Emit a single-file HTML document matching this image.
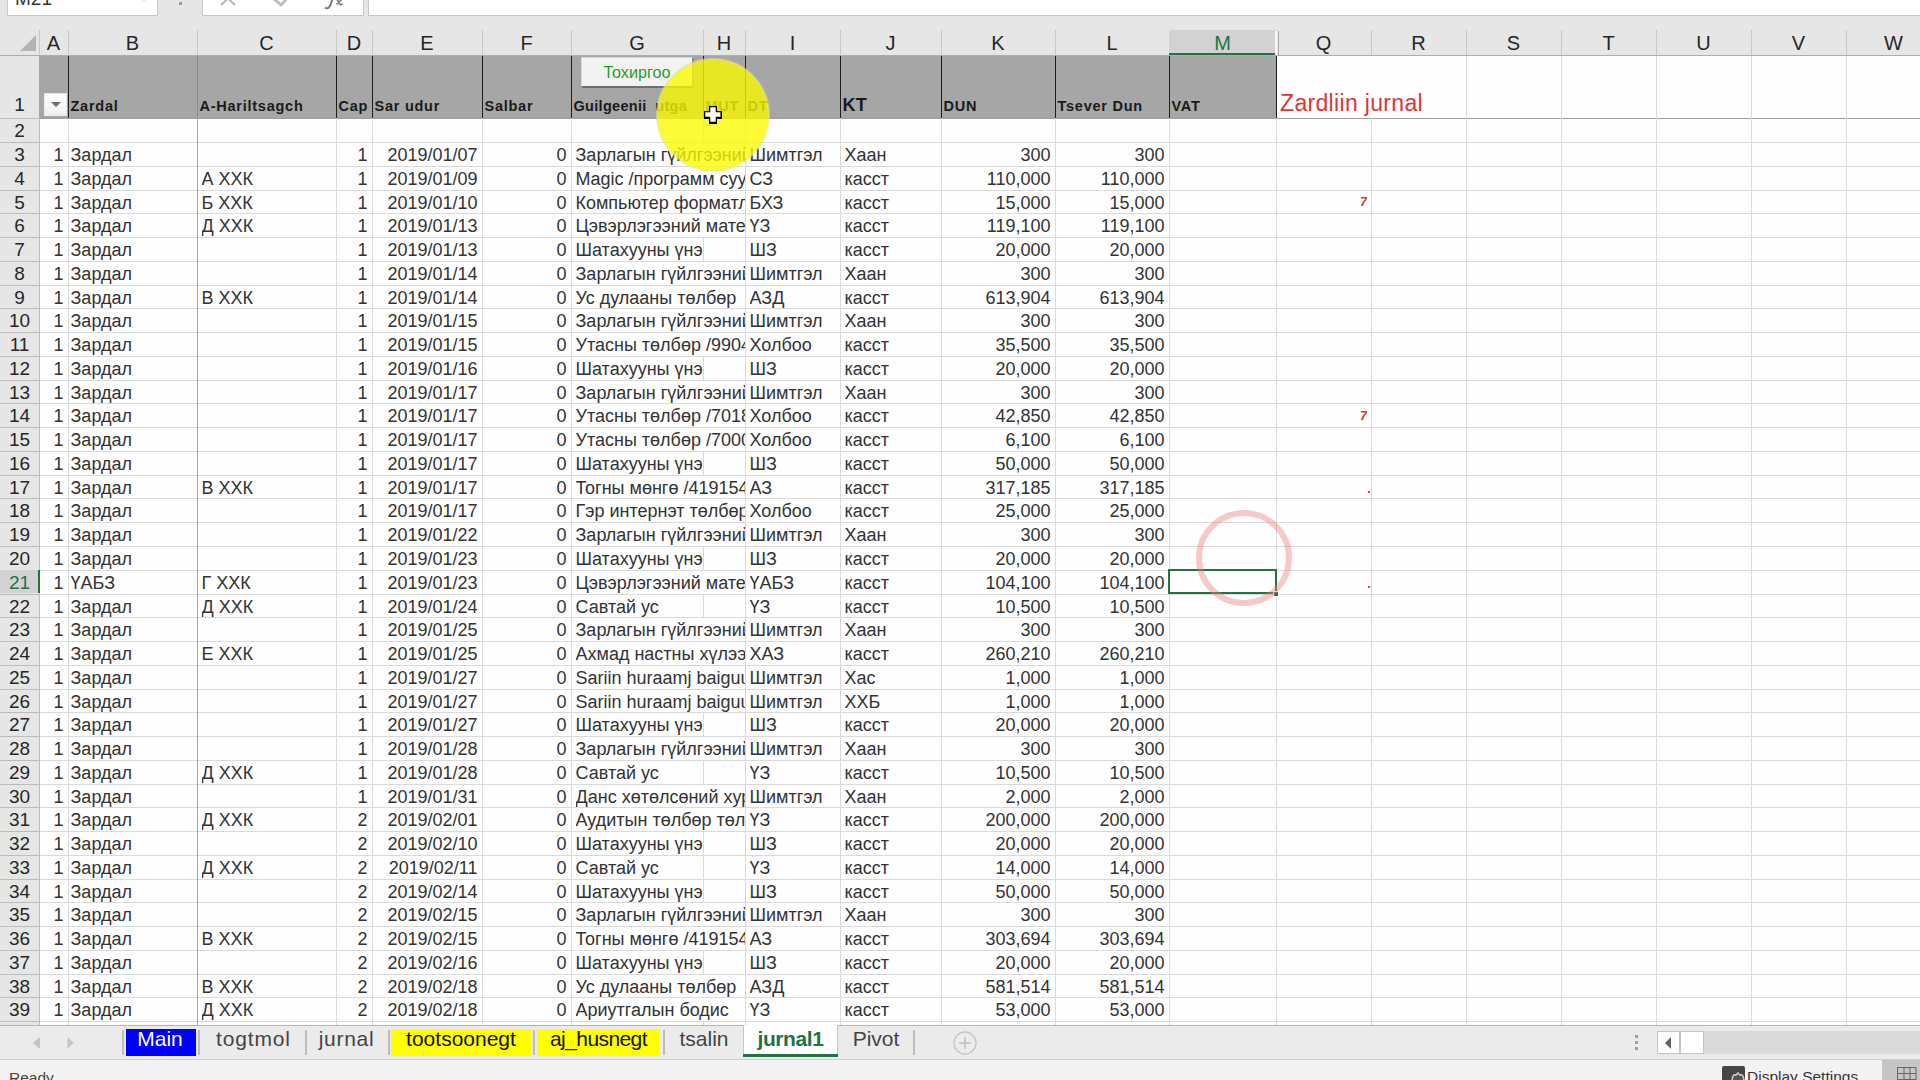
<!DOCTYPE html>
<html><head><meta charset="utf-8"><title>Excel</title>
<style>
*{margin:0;padding:0;box-sizing:border-box}
html,body{width:1920px;height:1080px;overflow:hidden;background:#fefefe}
body{position:relative;font-family:"Liberation Sans",sans-serif;color:#222}
.a{position:absolute}
.t{position:absolute;white-space:nowrap;overflow:hidden;font-size:18px;color:#333}
.r{text-align:right}
.hl{position:absolute;height:1px;background:#dadada}
.vl{position:absolute;width:1px;background:#dadada}
.ch{position:absolute;top:30px;height:25px;font-size:20px;color:#262626;text-align:center;line-height:27px}
.rh{position:absolute;left:0;width:39px;font-size:19px;color:#262626;text-align:center}
.b1{position:absolute;font-weight:bold;font-size:14.5px;color:#1a1a1a;letter-spacing:0.75px;white-space:pre}
.tab{position:absolute;top:1026px;height:28px;font-size:21px;line-height:26px;letter-spacing:0px;color:#444;text-align:center;white-space:nowrap}
.sep{position:absolute;top:1030px;width:2px;height:25px;background:#bdbdbd}
</style></head><body>

<div class="a" style="left:0;top:0;width:1920px;height:30px;background:#e6e6e6"></div>
<div class="a" style="left:7px;top:-12px;width:151px;height:28px;background:#fff;border:1px solid #c8c8c8"></div>
<div class="t" style="left:15px;top:-12.5px;font-size:19px;line-height:22px;color:#333">M21</div>
<div class="a" style="left:141px;top:-3px;width:0;height:0;border-left:3px solid transparent;border-right:3px solid transparent;border-top:4px solid #a0a0a0"></div>
<div class="a" style="left:179px;top:2px;width:3px;height:3px;background:#9a9a9a"></div>
<div class="a" style="left:202px;top:-12px;width:162px;height:28px;background:#fff;border:1px solid #c8c8c8"></div>
<svg class="a" style="left:215px;top:0" width="150" height="14"><path d="M6 -8 L20 5 M20 -8 L6 5" stroke="#b4b4b4" stroke-width="2" fill="none"/><path d="M58 -2 L66 5 L80 -10" stroke="#c0c0c0" stroke-width="3" fill="none"/></svg>
<svg class="a" style="left:320px;top:0" width="30" height="12"><path d="M5 7.5 Q8 9.5 10 6 L13.5 -4" stroke="#7a7a7a" stroke-width="2" fill="none"/><path d="M15.5 -1 Q17 -1 18 1 L20 4.5 Q21 5 22.5 4 M22 -1 L16.5 4.5" stroke="#7a7a7a" stroke-width="1.6" fill="none"/></svg>
<div class="a" style="left:368px;top:-12px;width:1560px;height:28px;background:#fff;border:1px solid #c8c8c8"></div>
<div class="a" style="left:0;top:30px;width:1920px;height:25.5px;background:#e6e6e6"></div>
<div class="a" style="left:0;top:55px;width:1920px;height:1px;background:#adadad"></div>
<div class="ch" style="left:39.00px;width:29.00px">A</div>
<div class="a" style="left:68.00px;top:30px;width:1px;height:25px;background:#c8c8c8"></div>
<div class="ch" style="left:68.00px;width:129.00px">B</div>
<div class="a" style="left:197.00px;top:30px;width:1px;height:25px;background:#c8c8c8"></div>
<div class="ch" style="left:197.00px;width:139.00px">C</div>
<div class="a" style="left:336.00px;top:30px;width:1px;height:25px;background:#c8c8c8"></div>
<div class="ch" style="left:336.00px;width:36.00px">D</div>
<div class="a" style="left:372.00px;top:30px;width:1px;height:25px;background:#c8c8c8"></div>
<div class="ch" style="left:372.00px;width:110.00px">E</div>
<div class="a" style="left:482.00px;top:30px;width:1px;height:25px;background:#c8c8c8"></div>
<div class="ch" style="left:482.00px;width:89.00px">F</div>
<div class="a" style="left:571.00px;top:30px;width:1px;height:25px;background:#c8c8c8"></div>
<div class="ch" style="left:571.00px;width:132.00px">G</div>
<div class="a" style="left:703.00px;top:30px;width:1px;height:25px;background:#c8c8c8"></div>
<div class="ch" style="left:703.00px;width:42.00px">H</div>
<div class="a" style="left:745.00px;top:30px;width:1px;height:25px;background:#c8c8c8"></div>
<div class="ch" style="left:745.00px;width:95.00px">I</div>
<div class="a" style="left:840.00px;top:30px;width:1px;height:25px;background:#c8c8c8"></div>
<div class="ch" style="left:840.00px;width:101.00px">J</div>
<div class="a" style="left:941.00px;top:30px;width:1px;height:25px;background:#c8c8c8"></div>
<div class="ch" style="left:941.00px;width:114.00px">K</div>
<div class="a" style="left:1055.00px;top:30px;width:1px;height:25px;background:#c8c8c8"></div>
<div class="ch" style="left:1055.00px;width:114.00px">L</div>
<div class="a" style="left:1169.00px;top:30px;width:1px;height:25px;background:#c8c8c8"></div>
<div class="a" style="left:1169.00px;top:30px;width:107.00px;height:25px;background:#d2d2d2"></div>
<div class="a" style="left:1169.00px;top:53px;width:107.00px;height:2px;background:#217346"></div>
<div class="ch" style="left:1169.00px;width:107.00px;color:#217346">M</div>
<div class="a" style="left:1276.00px;top:30px;width:1px;height:25px;background:#c8c8c8"></div>
<div class="ch" style="left:1276.00px;width:95.00px">Q</div>
<div class="a" style="left:1371.00px;top:30px;width:1px;height:25px;background:#c8c8c8"></div>
<div class="ch" style="left:1371.00px;width:95.00px">R</div>
<div class="a" style="left:1466.00px;top:30px;width:1px;height:25px;background:#c8c8c8"></div>
<div class="ch" style="left:1466.00px;width:95.00px">S</div>
<div class="a" style="left:1561.00px;top:30px;width:1px;height:25px;background:#c8c8c8"></div>
<div class="ch" style="left:1561.00px;width:95.00px">T</div>
<div class="a" style="left:1656.00px;top:30px;width:1px;height:25px;background:#c8c8c8"></div>
<div class="ch" style="left:1656.00px;width:95.00px">U</div>
<div class="a" style="left:1751.00px;top:30px;width:1px;height:25px;background:#c8c8c8"></div>
<div class="ch" style="left:1751.00px;width:95.00px">V</div>
<div class="a" style="left:1846.00px;top:30px;width:1px;height:25px;background:#c8c8c8"></div>
<div class="ch" style="left:1846.00px;width:95.00px">W</div>
<div class="a" style="left:1941.00px;top:30px;width:1px;height:25px;background:#c8c8c8"></div>
<div class="a" style="left:1275px;top:31px;width:2px;height:24px;background:#fafafa"></div>
<div class="a" style="left:1278px;top:31px;width:1px;height:24px;background:#a8a8a8"></div>
<svg class="a" style="left:19px;top:34px" width="18" height="18"><path d="M17 1 L17 17 L1 17 Z" fill="#b4b4b4"/></svg>
<div class="a" style="left:39px;top:30px;width:1px;height:25px;background:#c8c8c8"></div>
<div class="a" style="left:0;top:55.5px;width:39.5px;height:970.0px;background:#e6e6e6"></div>
<div class="a" style="left:39px;top:55.5px;width:1px;height:970.0px;background:#bcbcbc"></div>
<div class="rh" style="top:55.50px;height:62.80px;line-height:20px;padding-top:39.8px;color:#262626">1</div>
<div class="a" style="left:0;top:118.30px;width:39px;height:1px;background:#bcbcbc"></div>
<div class="rh" style="top:118.30px;height:23.76px;line-height:26.76px;color:#262626">2</div>
<div class="a" style="left:0;top:142.06px;width:39px;height:1px;background:#bcbcbc"></div>
<div class="rh" style="top:142.06px;height:23.76px;line-height:26.76px;color:#262626">3</div>
<div class="a" style="left:0;top:165.82px;width:39px;height:1px;background:#bcbcbc"></div>
<div class="rh" style="top:165.82px;height:23.76px;line-height:26.76px;color:#262626">4</div>
<div class="a" style="left:0;top:189.58px;width:39px;height:1px;background:#bcbcbc"></div>
<div class="rh" style="top:189.58px;height:23.76px;line-height:26.76px;color:#262626">5</div>
<div class="a" style="left:0;top:213.34px;width:39px;height:1px;background:#bcbcbc"></div>
<div class="rh" style="top:213.34px;height:23.76px;line-height:26.76px;color:#262626">6</div>
<div class="a" style="left:0;top:237.10px;width:39px;height:1px;background:#bcbcbc"></div>
<div class="rh" style="top:237.10px;height:23.76px;line-height:26.76px;color:#262626">7</div>
<div class="a" style="left:0;top:260.86px;width:39px;height:1px;background:#bcbcbc"></div>
<div class="rh" style="top:260.86px;height:23.76px;line-height:26.76px;color:#262626">8</div>
<div class="a" style="left:0;top:284.62px;width:39px;height:1px;background:#bcbcbc"></div>
<div class="rh" style="top:284.62px;height:23.76px;line-height:26.76px;color:#262626">9</div>
<div class="a" style="left:0;top:308.38px;width:39px;height:1px;background:#bcbcbc"></div>
<div class="rh" style="top:308.38px;height:23.76px;line-height:26.76px;color:#262626">10</div>
<div class="a" style="left:0;top:332.14px;width:39px;height:1px;background:#bcbcbc"></div>
<div class="rh" style="top:332.14px;height:23.76px;line-height:26.76px;color:#262626">11</div>
<div class="a" style="left:0;top:355.90px;width:39px;height:1px;background:#bcbcbc"></div>
<div class="rh" style="top:355.90px;height:23.76px;line-height:26.76px;color:#262626">12</div>
<div class="a" style="left:0;top:379.66px;width:39px;height:1px;background:#bcbcbc"></div>
<div class="rh" style="top:379.66px;height:23.76px;line-height:26.76px;color:#262626">13</div>
<div class="a" style="left:0;top:403.42px;width:39px;height:1px;background:#bcbcbc"></div>
<div class="rh" style="top:403.42px;height:23.76px;line-height:26.76px;color:#262626">14</div>
<div class="a" style="left:0;top:427.18px;width:39px;height:1px;background:#bcbcbc"></div>
<div class="rh" style="top:427.18px;height:23.76px;line-height:26.76px;color:#262626">15</div>
<div class="a" style="left:0;top:450.94px;width:39px;height:1px;background:#bcbcbc"></div>
<div class="rh" style="top:450.94px;height:23.76px;line-height:26.76px;color:#262626">16</div>
<div class="a" style="left:0;top:474.70px;width:39px;height:1px;background:#bcbcbc"></div>
<div class="rh" style="top:474.70px;height:23.76px;line-height:26.76px;color:#262626">17</div>
<div class="a" style="left:0;top:498.46px;width:39px;height:1px;background:#bcbcbc"></div>
<div class="rh" style="top:498.46px;height:23.76px;line-height:26.76px;color:#262626">18</div>
<div class="a" style="left:0;top:522.22px;width:39px;height:1px;background:#bcbcbc"></div>
<div class="rh" style="top:522.22px;height:23.76px;line-height:26.76px;color:#262626">19</div>
<div class="a" style="left:0;top:545.98px;width:39px;height:1px;background:#bcbcbc"></div>
<div class="rh" style="top:545.98px;height:23.76px;line-height:26.76px;color:#262626">20</div>
<div class="a" style="left:0;top:569.74px;width:39px;height:1px;background:#bcbcbc"></div>
<div class="a" style="left:0;top:569.74px;width:39.5px;height:23.76px;background:#d2d2d2"></div>
<div class="a" style="left:38px;top:569.74px;width:2px;height:23.76px;background:#217346"></div>
<div class="rh" style="top:569.74px;height:23.76px;line-height:26.76px;color:#217346">21</div>
<div class="a" style="left:0;top:593.50px;width:39px;height:1px;background:#bcbcbc"></div>
<div class="rh" style="top:593.50px;height:23.76px;line-height:26.76px;color:#262626">22</div>
<div class="a" style="left:0;top:617.26px;width:39px;height:1px;background:#bcbcbc"></div>
<div class="rh" style="top:617.26px;height:23.76px;line-height:26.76px;color:#262626">23</div>
<div class="a" style="left:0;top:641.02px;width:39px;height:1px;background:#bcbcbc"></div>
<div class="rh" style="top:641.02px;height:23.76px;line-height:26.76px;color:#262626">24</div>
<div class="a" style="left:0;top:664.78px;width:39px;height:1px;background:#bcbcbc"></div>
<div class="rh" style="top:664.78px;height:23.76px;line-height:26.76px;color:#262626">25</div>
<div class="a" style="left:0;top:688.54px;width:39px;height:1px;background:#bcbcbc"></div>
<div class="rh" style="top:688.54px;height:23.76px;line-height:26.76px;color:#262626">26</div>
<div class="a" style="left:0;top:712.30px;width:39px;height:1px;background:#bcbcbc"></div>
<div class="rh" style="top:712.30px;height:23.76px;line-height:26.76px;color:#262626">27</div>
<div class="a" style="left:0;top:736.06px;width:39px;height:1px;background:#bcbcbc"></div>
<div class="rh" style="top:736.06px;height:23.76px;line-height:26.76px;color:#262626">28</div>
<div class="a" style="left:0;top:759.82px;width:39px;height:1px;background:#bcbcbc"></div>
<div class="rh" style="top:759.82px;height:23.76px;line-height:26.76px;color:#262626">29</div>
<div class="a" style="left:0;top:783.58px;width:39px;height:1px;background:#bcbcbc"></div>
<div class="rh" style="top:783.58px;height:23.76px;line-height:26.76px;color:#262626">30</div>
<div class="a" style="left:0;top:807.34px;width:39px;height:1px;background:#bcbcbc"></div>
<div class="rh" style="top:807.34px;height:23.76px;line-height:26.76px;color:#262626">31</div>
<div class="a" style="left:0;top:831.10px;width:39px;height:1px;background:#bcbcbc"></div>
<div class="rh" style="top:831.10px;height:23.76px;line-height:26.76px;color:#262626">32</div>
<div class="a" style="left:0;top:854.86px;width:39px;height:1px;background:#bcbcbc"></div>
<div class="rh" style="top:854.86px;height:23.76px;line-height:26.76px;color:#262626">33</div>
<div class="a" style="left:0;top:878.62px;width:39px;height:1px;background:#bcbcbc"></div>
<div class="rh" style="top:878.62px;height:23.76px;line-height:26.76px;color:#262626">34</div>
<div class="a" style="left:0;top:902.38px;width:39px;height:1px;background:#bcbcbc"></div>
<div class="rh" style="top:902.38px;height:23.76px;line-height:26.76px;color:#262626">35</div>
<div class="a" style="left:0;top:926.14px;width:39px;height:1px;background:#bcbcbc"></div>
<div class="rh" style="top:926.14px;height:23.76px;line-height:26.76px;color:#262626">36</div>
<div class="a" style="left:0;top:949.90px;width:39px;height:1px;background:#bcbcbc"></div>
<div class="rh" style="top:949.90px;height:23.76px;line-height:26.76px;color:#262626">37</div>
<div class="a" style="left:0;top:973.66px;width:39px;height:1px;background:#bcbcbc"></div>
<div class="rh" style="top:973.66px;height:23.76px;line-height:26.76px;color:#262626">38</div>
<div class="a" style="left:0;top:997.42px;width:39px;height:1px;background:#bcbcbc"></div>
<div class="rh" style="top:997.42px;height:23.76px;line-height:26.76px;color:#262626">39</div>
<div class="a" style="left:0;top:1021.18px;width:39px;height:1px;background:#bcbcbc"></div>
<div class="rh" style="top:1021.18px;height:23.76px;line-height:26.76px;color:#262626">40</div>
<div class="a" style="left:0;top:1044.94px;width:39px;height:1px;background:#bcbcbc"></div>
<div class="a" style="left:39.00px;top:55.5px;width:1237.00px;height:62.80px;background:#a6a6a6"></div>
<div class="hl" style="left:40px;top:118.30px;width:1880px;background:#9e9e9e"></div>
<div class="hl" style="left:40px;top:142.06px;width:1880px"></div>
<div class="hl" style="left:40px;top:165.82px;width:1880px"></div>
<div class="hl" style="left:40px;top:189.58px;width:1880px"></div>
<div class="hl" style="left:40px;top:213.34px;width:1880px"></div>
<div class="hl" style="left:40px;top:237.10px;width:1880px"></div>
<div class="hl" style="left:40px;top:260.86px;width:1880px"></div>
<div class="hl" style="left:40px;top:284.62px;width:1880px"></div>
<div class="hl" style="left:40px;top:308.38px;width:1880px"></div>
<div class="hl" style="left:40px;top:332.14px;width:1880px"></div>
<div class="hl" style="left:40px;top:355.90px;width:1880px"></div>
<div class="hl" style="left:40px;top:379.66px;width:1880px"></div>
<div class="hl" style="left:40px;top:403.42px;width:1880px"></div>
<div class="hl" style="left:40px;top:427.18px;width:1880px"></div>
<div class="hl" style="left:40px;top:450.94px;width:1880px"></div>
<div class="hl" style="left:40px;top:474.70px;width:1880px"></div>
<div class="hl" style="left:40px;top:498.46px;width:1880px"></div>
<div class="hl" style="left:40px;top:522.22px;width:1880px"></div>
<div class="hl" style="left:40px;top:545.98px;width:1880px"></div>
<div class="hl" style="left:40px;top:569.74px;width:1880px"></div>
<div class="hl" style="left:40px;top:593.50px;width:1880px"></div>
<div class="hl" style="left:40px;top:617.26px;width:1880px"></div>
<div class="hl" style="left:40px;top:641.02px;width:1880px"></div>
<div class="hl" style="left:40px;top:664.78px;width:1880px"></div>
<div class="hl" style="left:40px;top:688.54px;width:1880px"></div>
<div class="hl" style="left:40px;top:712.30px;width:1880px"></div>
<div class="hl" style="left:40px;top:736.06px;width:1880px"></div>
<div class="hl" style="left:40px;top:759.82px;width:1880px"></div>
<div class="hl" style="left:40px;top:783.58px;width:1880px"></div>
<div class="hl" style="left:40px;top:807.34px;width:1880px"></div>
<div class="hl" style="left:40px;top:831.10px;width:1880px"></div>
<div class="hl" style="left:40px;top:854.86px;width:1880px"></div>
<div class="hl" style="left:40px;top:878.62px;width:1880px"></div>
<div class="hl" style="left:40px;top:902.38px;width:1880px"></div>
<div class="hl" style="left:40px;top:926.14px;width:1880px"></div>
<div class="hl" style="left:40px;top:949.90px;width:1880px"></div>
<div class="hl" style="left:40px;top:973.66px;width:1880px"></div>
<div class="hl" style="left:40px;top:997.42px;width:1880px"></div>
<div class="hl" style="left:40px;top:1021.18px;width:1880px"></div>
<div class="vl" style="left:68.00px;top:118.30px;height:907.20px"></div>
<div class="vl" style="left:197.00px;top:118.30px;height:907.20px;background:#a4a4a4"></div>
<div class="vl" style="left:336.00px;top:118.30px;height:907.20px"></div>
<div class="vl" style="left:372.00px;top:118.30px;height:907.20px"></div>
<div class="vl" style="left:482.00px;top:118.30px;height:907.20px"></div>
<div class="vl" style="left:571.00px;top:118.30px;height:907.20px"></div>
<div class="vl" style="left:745.00px;top:118.30px;height:907.20px"></div>
<div class="vl" style="left:840.00px;top:118.30px;height:907.20px"></div>
<div class="vl" style="left:941.00px;top:118.30px;height:907.20px"></div>
<div class="vl" style="left:1055.00px;top:118.30px;height:907.20px"></div>
<div class="vl" style="left:1169.00px;top:118.30px;height:907.20px"></div>
<div class="vl" style="left:1276.00px;top:118.30px;height:907.20px"></div>
<div class="vl" style="left:1371.00px;top:118.30px;height:907.20px"></div>
<div class="vl" style="left:1466.00px;top:118.30px;height:907.20px"></div>
<div class="vl" style="left:1561.00px;top:118.30px;height:907.20px"></div>
<div class="vl" style="left:1656.00px;top:118.30px;height:907.20px"></div>
<div class="vl" style="left:1751.00px;top:118.30px;height:907.20px"></div>
<div class="vl" style="left:1846.00px;top:118.30px;height:907.20px"></div>
<div class="vl" style="left:1941.00px;top:118.30px;height:907.20px"></div>
<div class="vl" style="left:703.00px;top:118.30px;height:24.76px"></div>
<div class="vl" style="left:703.00px;top:1021.18px;height:24.76px"></div>
<div class="vl" style="left:703.00px;top:237.10px;height:24.76px"></div>
<div class="vl" style="left:703.00px;top:355.90px;height:24.76px"></div>
<div class="vl" style="left:703.00px;top:450.94px;height:24.76px"></div>
<div class="vl" style="left:703.00px;top:545.98px;height:24.76px"></div>
<div class="vl" style="left:703.00px;top:593.50px;height:24.76px"></div>
<div class="vl" style="left:703.00px;top:712.30px;height:24.76px"></div>
<div class="vl" style="left:703.00px;top:759.82px;height:24.76px"></div>
<div class="vl" style="left:703.00px;top:831.10px;height:24.76px"></div>
<div class="vl" style="left:703.00px;top:854.86px;height:24.76px"></div>
<div class="vl" style="left:703.00px;top:878.62px;height:24.76px"></div>
<div class="vl" style="left:703.00px;top:949.90px;height:24.76px"></div>
<div class="a" style="left:68.00px;top:55.5px;width:1px;height:62.80px;background:#1e1e1e"></div>
<div class="a" style="left:197.00px;top:55.5px;width:1px;height:62.80px;background:#8a8a8a"></div>
<div class="a" style="left:336.00px;top:55.5px;width:1px;height:62.80px;background:#1e1e1e"></div>
<div class="a" style="left:372.00px;top:55.5px;width:1px;height:62.80px;background:#1e1e1e"></div>
<div class="a" style="left:482.00px;top:55.5px;width:1px;height:62.80px;background:#1e1e1e"></div>
<div class="a" style="left:571.00px;top:55.5px;width:1px;height:62.80px;background:#1e1e1e"></div>
<div class="a" style="left:703.00px;top:55.5px;width:1px;height:62.80px;background:#1e1e1e"></div>
<div class="a" style="left:745.00px;top:55.5px;width:1px;height:62.80px;background:#1e1e1e"></div>
<div class="a" style="left:840.00px;top:55.5px;width:1px;height:62.80px;background:#1e1e1e"></div>
<div class="a" style="left:941.00px;top:55.5px;width:1px;height:62.80px;background:#1e1e1e"></div>
<div class="a" style="left:1055.00px;top:55.5px;width:1px;height:62.80px;background:#1e1e1e"></div>
<div class="a" style="left:1169.00px;top:55.5px;width:1px;height:62.80px;background:#1e1e1e"></div>
<div class="a" style="left:1276.00px;top:55.5px;width:1px;height:62.80px;background:#1e1e1e"></div>
<div class="vl" style="left:1466.00px;top:55.5px;height:62.80px"></div>
<div class="vl" style="left:1561.00px;top:55.5px;height:62.80px"></div>
<div class="vl" style="left:1656.00px;top:55.5px;height:62.80px"></div>
<div class="vl" style="left:1751.00px;top:55.5px;height:62.80px"></div>
<div class="vl" style="left:1846.00px;top:55.5px;height:62.80px"></div>
<div class="vl" style="left:1941.00px;top:55.5px;height:62.80px"></div>
<div class="b1" style="left:70.50px;top:96px;line-height:20px;">Zardal</div>
<div class="b1" style="left:199.50px;top:96px;line-height:20px;">A-Hariltsagch</div>
<div class="b1" style="left:338.50px;top:96px;line-height:20px;">Cap</div>
<div class="b1" style="left:374.50px;top:96px;line-height:20px;">Sar udur</div>
<div class="b1" style="left:484.50px;top:96px;line-height:20px;">Salbar</div>
<div class="b1" style="left:573.50px;top:96px;line-height:20px;letter-spacing:0.3px;">Guilgeenii  utga</div>
<div class="b1" style="left:705.50px;top:96px;line-height:20px;">MUT</div>
<div class="b1" style="left:747.50px;top:96px;line-height:20px;">DT</div>
<div class="b1" style="left:842.50px;top:96px;line-height:20px;font-size:18px;letter-spacing:0.2px;top:95px;">KT</div>
<div class="b1" style="left:943.50px;top:96px;line-height:20px;">DUN</div>
<div class="b1" style="left:1057.50px;top:96px;line-height:20px;">Tsever Dun</div>
<div class="b1" style="left:1171.50px;top:96px;line-height:20px;">VAT</div>
<div class="a" style="left:44px;top:93px;width:23px;height:23px;background:linear-gradient(#fff,#eef0f4);border:1px dotted #dde2ea"></div>
<svg class="a" style="left:50px;top:101px" width="12" height="8"><path d="M1 1 L11 1 L6 6 Z" fill="#6d6d6d"/></svg>
<div class="t" style="left:1280px;top:90px;font-size:23px;letter-spacing:0.33px;line-height:26px;color:#d83838;overflow:visible">Zardliin jurnal</div>
<div class="a" style="left:580.5px;top:57px;width:113px;height:31px;background:#f2f2f2;border:1px solid #d8d8d8;border-right:2px solid #8c8c8c;border-bottom:2px solid #6e6e6e"></div>
<div class="t" style="left:581px;top:61px;width:112px;text-align:center;font-size:16.2px;line-height:22px;color:#2c9a2c">Тохиргоо</div>
<div class="t r" style="left:39.00px;top:142.06px;width:24.50px;height:23.76px;line-height:26.76px;">1</div>
<div class="t" style="left:72.50px;top:142.06px;width:124.50px;height:23.76px;line-height:26.76px;margin-left:-2px">Зардал</div>
<div class="t r" style="left:336.00px;top:142.06px;width:31.50px;height:23.76px;line-height:26.76px;">1</div>
<div class="t r" style="left:372.00px;top:142.06px;width:105.50px;height:23.76px;line-height:26.76px;">2019/01/07</div>
<div class="t r" style="left:482.00px;top:142.06px;width:84.50px;height:23.76px;line-height:26.76px;">0</div>
<div class="t" style="left:575.50px;top:142.06px;width:169.50px;height:23.76px;line-height:26.76px;">Зарлагын гүйлгээний</div>
<div class="t" style="left:749.50px;top:142.06px;width:90.50px;height:23.76px;line-height:26.76px;">Шимтгэл</div>
<div class="t" style="left:844.50px;top:142.06px;width:96.50px;height:23.76px;line-height:26.76px;">Хаан</div>
<div class="t r" style="left:941.00px;top:142.06px;width:109.50px;height:23.76px;line-height:26.76px;">300</div>
<div class="t r" style="left:1055.00px;top:142.06px;width:109.50px;height:23.76px;line-height:26.76px;">300</div>
<div class="t r" style="left:39.00px;top:165.82px;width:24.50px;height:23.76px;line-height:26.76px;">1</div>
<div class="t" style="left:72.50px;top:165.82px;width:124.50px;height:23.76px;line-height:26.76px;margin-left:-2px">Зардал</div>
<div class="t" style="left:201.50px;top:165.82px;width:134.50px;height:23.76px;line-height:26.76px;">А ХХК</div>
<div class="t r" style="left:336.00px;top:165.82px;width:31.50px;height:23.76px;line-height:26.76px;">1</div>
<div class="t r" style="left:372.00px;top:165.82px;width:105.50px;height:23.76px;line-height:26.76px;">2019/01/09</div>
<div class="t r" style="left:482.00px;top:165.82px;width:84.50px;height:23.76px;line-height:26.76px;">0</div>
<div class="t" style="left:575.50px;top:165.82px;width:169.50px;height:23.76px;line-height:26.76px;">Magic /программ суулгасан</div>
<div class="t" style="left:749.50px;top:165.82px;width:90.50px;height:23.76px;line-height:26.76px;">СЗ</div>
<div class="t" style="left:844.50px;top:165.82px;width:96.50px;height:23.76px;line-height:26.76px;">касст</div>
<div class="t r" style="left:941.00px;top:165.82px;width:109.50px;height:23.76px;line-height:26.76px;">110,000</div>
<div class="t r" style="left:1055.00px;top:165.82px;width:109.50px;height:23.76px;line-height:26.76px;">110,000</div>
<div class="t r" style="left:39.00px;top:189.58px;width:24.50px;height:23.76px;line-height:26.76px;">1</div>
<div class="t" style="left:72.50px;top:189.58px;width:124.50px;height:23.76px;line-height:26.76px;margin-left:-2px">Зардал</div>
<div class="t" style="left:201.50px;top:189.58px;width:134.50px;height:23.76px;line-height:26.76px;">Б ХХК</div>
<div class="t r" style="left:336.00px;top:189.58px;width:31.50px;height:23.76px;line-height:26.76px;">1</div>
<div class="t r" style="left:372.00px;top:189.58px;width:105.50px;height:23.76px;line-height:26.76px;">2019/01/10</div>
<div class="t r" style="left:482.00px;top:189.58px;width:84.50px;height:23.76px;line-height:26.76px;">0</div>
<div class="t" style="left:575.50px;top:189.58px;width:169.50px;height:23.76px;line-height:26.76px;">Компьютер форматлах</div>
<div class="t" style="left:749.50px;top:189.58px;width:90.50px;height:23.76px;line-height:26.76px;">БХЗ</div>
<div class="t" style="left:844.50px;top:189.58px;width:96.50px;height:23.76px;line-height:26.76px;">касст</div>
<div class="t r" style="left:941.00px;top:189.58px;width:109.50px;height:23.76px;line-height:26.76px;">15,000</div>
<div class="t r" style="left:1055.00px;top:189.58px;width:109.50px;height:23.76px;line-height:26.76px;">15,000</div>
<div class="t r" style="left:39.00px;top:213.34px;width:24.50px;height:23.76px;line-height:26.76px;">1</div>
<div class="t" style="left:72.50px;top:213.34px;width:124.50px;height:23.76px;line-height:26.76px;margin-left:-2px">Зардал</div>
<div class="t" style="left:201.50px;top:213.34px;width:134.50px;height:23.76px;line-height:26.76px;">Д ХХК</div>
<div class="t r" style="left:336.00px;top:213.34px;width:31.50px;height:23.76px;line-height:26.76px;">1</div>
<div class="t r" style="left:372.00px;top:213.34px;width:105.50px;height:23.76px;line-height:26.76px;">2019/01/13</div>
<div class="t r" style="left:482.00px;top:213.34px;width:84.50px;height:23.76px;line-height:26.76px;">0</div>
<div class="t" style="left:575.50px;top:213.34px;width:169.50px;height:23.76px;line-height:26.76px;">Цэвэрлэгээний материал</div>
<div class="t" style="left:749.50px;top:213.34px;width:90.50px;height:23.76px;line-height:26.76px;">ҮЗ</div>
<div class="t" style="left:844.50px;top:213.34px;width:96.50px;height:23.76px;line-height:26.76px;">касст</div>
<div class="t r" style="left:941.00px;top:213.34px;width:109.50px;height:23.76px;line-height:26.76px;">119,100</div>
<div class="t r" style="left:1055.00px;top:213.34px;width:109.50px;height:23.76px;line-height:26.76px;">119,100</div>
<div class="t r" style="left:39.00px;top:237.10px;width:24.50px;height:23.76px;line-height:26.76px;">1</div>
<div class="t" style="left:72.50px;top:237.10px;width:124.50px;height:23.76px;line-height:26.76px;margin-left:-2px">Зардал</div>
<div class="t r" style="left:336.00px;top:237.10px;width:31.50px;height:23.76px;line-height:26.76px;">1</div>
<div class="t r" style="left:372.00px;top:237.10px;width:105.50px;height:23.76px;line-height:26.76px;">2019/01/13</div>
<div class="t r" style="left:482.00px;top:237.10px;width:84.50px;height:23.76px;line-height:26.76px;">0</div>
<div class="t" style="left:575.50px;top:237.10px;width:169.50px;height:23.76px;line-height:26.76px;">Шатахууны үнэ</div>
<div class="t" style="left:749.50px;top:237.10px;width:90.50px;height:23.76px;line-height:26.76px;">ШЗ</div>
<div class="t" style="left:844.50px;top:237.10px;width:96.50px;height:23.76px;line-height:26.76px;">касст</div>
<div class="t r" style="left:941.00px;top:237.10px;width:109.50px;height:23.76px;line-height:26.76px;">20,000</div>
<div class="t r" style="left:1055.00px;top:237.10px;width:109.50px;height:23.76px;line-height:26.76px;">20,000</div>
<div class="t r" style="left:39.00px;top:260.86px;width:24.50px;height:23.76px;line-height:26.76px;">1</div>
<div class="t" style="left:72.50px;top:260.86px;width:124.50px;height:23.76px;line-height:26.76px;margin-left:-2px">Зардал</div>
<div class="t r" style="left:336.00px;top:260.86px;width:31.50px;height:23.76px;line-height:26.76px;">1</div>
<div class="t r" style="left:372.00px;top:260.86px;width:105.50px;height:23.76px;line-height:26.76px;">2019/01/14</div>
<div class="t r" style="left:482.00px;top:260.86px;width:84.50px;height:23.76px;line-height:26.76px;">0</div>
<div class="t" style="left:575.50px;top:260.86px;width:169.50px;height:23.76px;line-height:26.76px;">Зарлагын гүйлгээний</div>
<div class="t" style="left:749.50px;top:260.86px;width:90.50px;height:23.76px;line-height:26.76px;">Шимтгэл</div>
<div class="t" style="left:844.50px;top:260.86px;width:96.50px;height:23.76px;line-height:26.76px;">Хаан</div>
<div class="t r" style="left:941.00px;top:260.86px;width:109.50px;height:23.76px;line-height:26.76px;">300</div>
<div class="t r" style="left:1055.00px;top:260.86px;width:109.50px;height:23.76px;line-height:26.76px;">300</div>
<div class="t r" style="left:39.00px;top:284.62px;width:24.50px;height:23.76px;line-height:26.76px;">1</div>
<div class="t" style="left:72.50px;top:284.62px;width:124.50px;height:23.76px;line-height:26.76px;margin-left:-2px">Зардал</div>
<div class="t" style="left:201.50px;top:284.62px;width:134.50px;height:23.76px;line-height:26.76px;">В ХХК</div>
<div class="t r" style="left:336.00px;top:284.62px;width:31.50px;height:23.76px;line-height:26.76px;">1</div>
<div class="t r" style="left:372.00px;top:284.62px;width:105.50px;height:23.76px;line-height:26.76px;">2019/01/14</div>
<div class="t r" style="left:482.00px;top:284.62px;width:84.50px;height:23.76px;line-height:26.76px;">0</div>
<div class="t" style="left:575.50px;top:284.62px;width:169.50px;height:23.76px;line-height:26.76px;">Ус дулааны төлбөр</div>
<div class="t" style="left:749.50px;top:284.62px;width:90.50px;height:23.76px;line-height:26.76px;">АЗД</div>
<div class="t" style="left:844.50px;top:284.62px;width:96.50px;height:23.76px;line-height:26.76px;">касст</div>
<div class="t r" style="left:941.00px;top:284.62px;width:109.50px;height:23.76px;line-height:26.76px;">613,904</div>
<div class="t r" style="left:1055.00px;top:284.62px;width:109.50px;height:23.76px;line-height:26.76px;">613,904</div>
<div class="t r" style="left:39.00px;top:308.38px;width:24.50px;height:23.76px;line-height:26.76px;">1</div>
<div class="t" style="left:72.50px;top:308.38px;width:124.50px;height:23.76px;line-height:26.76px;margin-left:-2px">Зардал</div>
<div class="t r" style="left:336.00px;top:308.38px;width:31.50px;height:23.76px;line-height:26.76px;">1</div>
<div class="t r" style="left:372.00px;top:308.38px;width:105.50px;height:23.76px;line-height:26.76px;">2019/01/15</div>
<div class="t r" style="left:482.00px;top:308.38px;width:84.50px;height:23.76px;line-height:26.76px;">0</div>
<div class="t" style="left:575.50px;top:308.38px;width:169.50px;height:23.76px;line-height:26.76px;">Зарлагын гүйлгээний</div>
<div class="t" style="left:749.50px;top:308.38px;width:90.50px;height:23.76px;line-height:26.76px;">Шимтгэл</div>
<div class="t" style="left:844.50px;top:308.38px;width:96.50px;height:23.76px;line-height:26.76px;">Хаан</div>
<div class="t r" style="left:941.00px;top:308.38px;width:109.50px;height:23.76px;line-height:26.76px;">300</div>
<div class="t r" style="left:1055.00px;top:308.38px;width:109.50px;height:23.76px;line-height:26.76px;">300</div>
<div class="t r" style="left:39.00px;top:332.14px;width:24.50px;height:23.76px;line-height:26.76px;">1</div>
<div class="t" style="left:72.50px;top:332.14px;width:124.50px;height:23.76px;line-height:26.76px;margin-left:-2px">Зардал</div>
<div class="t r" style="left:336.00px;top:332.14px;width:31.50px;height:23.76px;line-height:26.76px;">1</div>
<div class="t r" style="left:372.00px;top:332.14px;width:105.50px;height:23.76px;line-height:26.76px;">2019/01/15</div>
<div class="t r" style="left:482.00px;top:332.14px;width:84.50px;height:23.76px;line-height:26.76px;">0</div>
<div class="t" style="left:575.50px;top:332.14px;width:169.50px;height:23.76px;line-height:26.76px;">Утасны төлбөр /99040000</div>
<div class="t" style="left:749.50px;top:332.14px;width:90.50px;height:23.76px;line-height:26.76px;">Холбоо</div>
<div class="t" style="left:844.50px;top:332.14px;width:96.50px;height:23.76px;line-height:26.76px;">касст</div>
<div class="t r" style="left:941.00px;top:332.14px;width:109.50px;height:23.76px;line-height:26.76px;">35,500</div>
<div class="t r" style="left:1055.00px;top:332.14px;width:109.50px;height:23.76px;line-height:26.76px;">35,500</div>
<div class="t r" style="left:39.00px;top:355.90px;width:24.50px;height:23.76px;line-height:26.76px;">1</div>
<div class="t" style="left:72.50px;top:355.90px;width:124.50px;height:23.76px;line-height:26.76px;margin-left:-2px">Зардал</div>
<div class="t r" style="left:336.00px;top:355.90px;width:31.50px;height:23.76px;line-height:26.76px;">1</div>
<div class="t r" style="left:372.00px;top:355.90px;width:105.50px;height:23.76px;line-height:26.76px;">2019/01/16</div>
<div class="t r" style="left:482.00px;top:355.90px;width:84.50px;height:23.76px;line-height:26.76px;">0</div>
<div class="t" style="left:575.50px;top:355.90px;width:169.50px;height:23.76px;line-height:26.76px;">Шатахууны үнэ</div>
<div class="t" style="left:749.50px;top:355.90px;width:90.50px;height:23.76px;line-height:26.76px;">ШЗ</div>
<div class="t" style="left:844.50px;top:355.90px;width:96.50px;height:23.76px;line-height:26.76px;">касст</div>
<div class="t r" style="left:941.00px;top:355.90px;width:109.50px;height:23.76px;line-height:26.76px;">20,000</div>
<div class="t r" style="left:1055.00px;top:355.90px;width:109.50px;height:23.76px;line-height:26.76px;">20,000</div>
<div class="t r" style="left:39.00px;top:379.66px;width:24.50px;height:23.76px;line-height:26.76px;">1</div>
<div class="t" style="left:72.50px;top:379.66px;width:124.50px;height:23.76px;line-height:26.76px;margin-left:-2px">Зардал</div>
<div class="t r" style="left:336.00px;top:379.66px;width:31.50px;height:23.76px;line-height:26.76px;">1</div>
<div class="t r" style="left:372.00px;top:379.66px;width:105.50px;height:23.76px;line-height:26.76px;">2019/01/17</div>
<div class="t r" style="left:482.00px;top:379.66px;width:84.50px;height:23.76px;line-height:26.76px;">0</div>
<div class="t" style="left:575.50px;top:379.66px;width:169.50px;height:23.76px;line-height:26.76px;">Зарлагын гүйлгээний</div>
<div class="t" style="left:749.50px;top:379.66px;width:90.50px;height:23.76px;line-height:26.76px;">Шимтгэл</div>
<div class="t" style="left:844.50px;top:379.66px;width:96.50px;height:23.76px;line-height:26.76px;">Хаан</div>
<div class="t r" style="left:941.00px;top:379.66px;width:109.50px;height:23.76px;line-height:26.76px;">300</div>
<div class="t r" style="left:1055.00px;top:379.66px;width:109.50px;height:23.76px;line-height:26.76px;">300</div>
<div class="t r" style="left:39.00px;top:403.42px;width:24.50px;height:23.76px;line-height:26.76px;">1</div>
<div class="t" style="left:72.50px;top:403.42px;width:124.50px;height:23.76px;line-height:26.76px;margin-left:-2px">Зардал</div>
<div class="t r" style="left:336.00px;top:403.42px;width:31.50px;height:23.76px;line-height:26.76px;">1</div>
<div class="t r" style="left:372.00px;top:403.42px;width:105.50px;height:23.76px;line-height:26.76px;">2019/01/17</div>
<div class="t r" style="left:482.00px;top:403.42px;width:84.50px;height:23.76px;line-height:26.76px;">0</div>
<div class="t" style="left:575.50px;top:403.42px;width:169.50px;height:23.76px;line-height:26.76px;">Утасны төлбөр /70180000</div>
<div class="t" style="left:749.50px;top:403.42px;width:90.50px;height:23.76px;line-height:26.76px;">Холбоо</div>
<div class="t" style="left:844.50px;top:403.42px;width:96.50px;height:23.76px;line-height:26.76px;">касст</div>
<div class="t r" style="left:941.00px;top:403.42px;width:109.50px;height:23.76px;line-height:26.76px;">42,850</div>
<div class="t r" style="left:1055.00px;top:403.42px;width:109.50px;height:23.76px;line-height:26.76px;">42,850</div>
<div class="t r" style="left:39.00px;top:427.18px;width:24.50px;height:23.76px;line-height:26.76px;">1</div>
<div class="t" style="left:72.50px;top:427.18px;width:124.50px;height:23.76px;line-height:26.76px;margin-left:-2px">Зардал</div>
<div class="t r" style="left:336.00px;top:427.18px;width:31.50px;height:23.76px;line-height:26.76px;">1</div>
<div class="t r" style="left:372.00px;top:427.18px;width:105.50px;height:23.76px;line-height:26.76px;">2019/01/17</div>
<div class="t r" style="left:482.00px;top:427.18px;width:84.50px;height:23.76px;line-height:26.76px;">0</div>
<div class="t" style="left:575.50px;top:427.18px;width:169.50px;height:23.76px;line-height:26.76px;">Утасны төлбөр /70000000</div>
<div class="t" style="left:749.50px;top:427.18px;width:90.50px;height:23.76px;line-height:26.76px;">Холбоо</div>
<div class="t" style="left:844.50px;top:427.18px;width:96.50px;height:23.76px;line-height:26.76px;">касст</div>
<div class="t r" style="left:941.00px;top:427.18px;width:109.50px;height:23.76px;line-height:26.76px;">6,100</div>
<div class="t r" style="left:1055.00px;top:427.18px;width:109.50px;height:23.76px;line-height:26.76px;">6,100</div>
<div class="t r" style="left:39.00px;top:450.94px;width:24.50px;height:23.76px;line-height:26.76px;">1</div>
<div class="t" style="left:72.50px;top:450.94px;width:124.50px;height:23.76px;line-height:26.76px;margin-left:-2px">Зардал</div>
<div class="t r" style="left:336.00px;top:450.94px;width:31.50px;height:23.76px;line-height:26.76px;">1</div>
<div class="t r" style="left:372.00px;top:450.94px;width:105.50px;height:23.76px;line-height:26.76px;">2019/01/17</div>
<div class="t r" style="left:482.00px;top:450.94px;width:84.50px;height:23.76px;line-height:26.76px;">0</div>
<div class="t" style="left:575.50px;top:450.94px;width:169.50px;height:23.76px;line-height:26.76px;">Шатахууны үнэ</div>
<div class="t" style="left:749.50px;top:450.94px;width:90.50px;height:23.76px;line-height:26.76px;">ШЗ</div>
<div class="t" style="left:844.50px;top:450.94px;width:96.50px;height:23.76px;line-height:26.76px;">касст</div>
<div class="t r" style="left:941.00px;top:450.94px;width:109.50px;height:23.76px;line-height:26.76px;">50,000</div>
<div class="t r" style="left:1055.00px;top:450.94px;width:109.50px;height:23.76px;line-height:26.76px;">50,000</div>
<div class="t r" style="left:39.00px;top:474.70px;width:24.50px;height:23.76px;line-height:26.76px;">1</div>
<div class="t" style="left:72.50px;top:474.70px;width:124.50px;height:23.76px;line-height:26.76px;margin-left:-2px">Зардал</div>
<div class="t" style="left:201.50px;top:474.70px;width:134.50px;height:23.76px;line-height:26.76px;">В ХХК</div>
<div class="t r" style="left:336.00px;top:474.70px;width:31.50px;height:23.76px;line-height:26.76px;">1</div>
<div class="t r" style="left:372.00px;top:474.70px;width:105.50px;height:23.76px;line-height:26.76px;">2019/01/17</div>
<div class="t r" style="left:482.00px;top:474.70px;width:84.50px;height:23.76px;line-height:26.76px;">0</div>
<div class="t" style="left:575.50px;top:474.70px;width:169.50px;height:23.76px;line-height:26.76px;">Тогны мөнгө /4191540/</div>
<div class="t" style="left:749.50px;top:474.70px;width:90.50px;height:23.76px;line-height:26.76px;">АЗ</div>
<div class="t" style="left:844.50px;top:474.70px;width:96.50px;height:23.76px;line-height:26.76px;">касст</div>
<div class="t r" style="left:941.00px;top:474.70px;width:109.50px;height:23.76px;line-height:26.76px;">317,185</div>
<div class="t r" style="left:1055.00px;top:474.70px;width:109.50px;height:23.76px;line-height:26.76px;">317,185</div>
<div class="t r" style="left:39.00px;top:498.46px;width:24.50px;height:23.76px;line-height:26.76px;">1</div>
<div class="t" style="left:72.50px;top:498.46px;width:124.50px;height:23.76px;line-height:26.76px;margin-left:-2px">Зардал</div>
<div class="t r" style="left:336.00px;top:498.46px;width:31.50px;height:23.76px;line-height:26.76px;">1</div>
<div class="t r" style="left:372.00px;top:498.46px;width:105.50px;height:23.76px;line-height:26.76px;">2019/01/17</div>
<div class="t r" style="left:482.00px;top:498.46px;width:84.50px;height:23.76px;line-height:26.76px;">0</div>
<div class="t" style="left:575.50px;top:498.46px;width:169.50px;height:23.76px;line-height:26.76px;">Гэр интернэт төлбөр</div>
<div class="t" style="left:749.50px;top:498.46px;width:90.50px;height:23.76px;line-height:26.76px;">Холбоо</div>
<div class="t" style="left:844.50px;top:498.46px;width:96.50px;height:23.76px;line-height:26.76px;">касст</div>
<div class="t r" style="left:941.00px;top:498.46px;width:109.50px;height:23.76px;line-height:26.76px;">25,000</div>
<div class="t r" style="left:1055.00px;top:498.46px;width:109.50px;height:23.76px;line-height:26.76px;">25,000</div>
<div class="t r" style="left:39.00px;top:522.22px;width:24.50px;height:23.76px;line-height:26.76px;">1</div>
<div class="t" style="left:72.50px;top:522.22px;width:124.50px;height:23.76px;line-height:26.76px;margin-left:-2px">Зардал</div>
<div class="t r" style="left:336.00px;top:522.22px;width:31.50px;height:23.76px;line-height:26.76px;">1</div>
<div class="t r" style="left:372.00px;top:522.22px;width:105.50px;height:23.76px;line-height:26.76px;">2019/01/22</div>
<div class="t r" style="left:482.00px;top:522.22px;width:84.50px;height:23.76px;line-height:26.76px;">0</div>
<div class="t" style="left:575.50px;top:522.22px;width:169.50px;height:23.76px;line-height:26.76px;">Зарлагын гүйлгээний</div>
<div class="t" style="left:749.50px;top:522.22px;width:90.50px;height:23.76px;line-height:26.76px;">Шимтгэл</div>
<div class="t" style="left:844.50px;top:522.22px;width:96.50px;height:23.76px;line-height:26.76px;">Хаан</div>
<div class="t r" style="left:941.00px;top:522.22px;width:109.50px;height:23.76px;line-height:26.76px;">300</div>
<div class="t r" style="left:1055.00px;top:522.22px;width:109.50px;height:23.76px;line-height:26.76px;">300</div>
<div class="t r" style="left:39.00px;top:545.98px;width:24.50px;height:23.76px;line-height:26.76px;">1</div>
<div class="t" style="left:72.50px;top:545.98px;width:124.50px;height:23.76px;line-height:26.76px;margin-left:-2px">Зардал</div>
<div class="t r" style="left:336.00px;top:545.98px;width:31.50px;height:23.76px;line-height:26.76px;">1</div>
<div class="t r" style="left:372.00px;top:545.98px;width:105.50px;height:23.76px;line-height:26.76px;">2019/01/23</div>
<div class="t r" style="left:482.00px;top:545.98px;width:84.50px;height:23.76px;line-height:26.76px;">0</div>
<div class="t" style="left:575.50px;top:545.98px;width:169.50px;height:23.76px;line-height:26.76px;">Шатахууны үнэ</div>
<div class="t" style="left:749.50px;top:545.98px;width:90.50px;height:23.76px;line-height:26.76px;">ШЗ</div>
<div class="t" style="left:844.50px;top:545.98px;width:96.50px;height:23.76px;line-height:26.76px;">касст</div>
<div class="t r" style="left:941.00px;top:545.98px;width:109.50px;height:23.76px;line-height:26.76px;">20,000</div>
<div class="t r" style="left:1055.00px;top:545.98px;width:109.50px;height:23.76px;line-height:26.76px;">20,000</div>
<div class="t r" style="left:39.00px;top:569.74px;width:24.50px;height:23.76px;line-height:26.76px;">1</div>
<div class="t" style="left:72.50px;top:569.74px;width:124.50px;height:23.76px;line-height:26.76px;margin-left:-2px">ҮАБЗ</div>
<div class="t" style="left:201.50px;top:569.74px;width:134.50px;height:23.76px;line-height:26.76px;">Г ХХК</div>
<div class="t r" style="left:336.00px;top:569.74px;width:31.50px;height:23.76px;line-height:26.76px;">1</div>
<div class="t r" style="left:372.00px;top:569.74px;width:105.50px;height:23.76px;line-height:26.76px;">2019/01/23</div>
<div class="t r" style="left:482.00px;top:569.74px;width:84.50px;height:23.76px;line-height:26.76px;">0</div>
<div class="t" style="left:575.50px;top:569.74px;width:169.50px;height:23.76px;line-height:26.76px;">Цэвэрлэгээний материал</div>
<div class="t" style="left:749.50px;top:569.74px;width:90.50px;height:23.76px;line-height:26.76px;">ҮАБЗ</div>
<div class="t" style="left:844.50px;top:569.74px;width:96.50px;height:23.76px;line-height:26.76px;">касст</div>
<div class="t r" style="left:941.00px;top:569.74px;width:109.50px;height:23.76px;line-height:26.76px;">104,100</div>
<div class="t r" style="left:1055.00px;top:569.74px;width:109.50px;height:23.76px;line-height:26.76px;">104,100</div>
<div class="t r" style="left:39.00px;top:593.50px;width:24.50px;height:23.76px;line-height:26.76px;">1</div>
<div class="t" style="left:72.50px;top:593.50px;width:124.50px;height:23.76px;line-height:26.76px;margin-left:-2px">Зардал</div>
<div class="t" style="left:201.50px;top:593.50px;width:134.50px;height:23.76px;line-height:26.76px;">Д ХХК</div>
<div class="t r" style="left:336.00px;top:593.50px;width:31.50px;height:23.76px;line-height:26.76px;">1</div>
<div class="t r" style="left:372.00px;top:593.50px;width:105.50px;height:23.76px;line-height:26.76px;">2019/01/24</div>
<div class="t r" style="left:482.00px;top:593.50px;width:84.50px;height:23.76px;line-height:26.76px;">0</div>
<div class="t" style="left:575.50px;top:593.50px;width:169.50px;height:23.76px;line-height:26.76px;">Савтай ус</div>
<div class="t" style="left:749.50px;top:593.50px;width:90.50px;height:23.76px;line-height:26.76px;">ҮЗ</div>
<div class="t" style="left:844.50px;top:593.50px;width:96.50px;height:23.76px;line-height:26.76px;">касст</div>
<div class="t r" style="left:941.00px;top:593.50px;width:109.50px;height:23.76px;line-height:26.76px;">10,500</div>
<div class="t r" style="left:1055.00px;top:593.50px;width:109.50px;height:23.76px;line-height:26.76px;">10,500</div>
<div class="t r" style="left:39.00px;top:617.26px;width:24.50px;height:23.76px;line-height:26.76px;">1</div>
<div class="t" style="left:72.50px;top:617.26px;width:124.50px;height:23.76px;line-height:26.76px;margin-left:-2px">Зардал</div>
<div class="t r" style="left:336.00px;top:617.26px;width:31.50px;height:23.76px;line-height:26.76px;">1</div>
<div class="t r" style="left:372.00px;top:617.26px;width:105.50px;height:23.76px;line-height:26.76px;">2019/01/25</div>
<div class="t r" style="left:482.00px;top:617.26px;width:84.50px;height:23.76px;line-height:26.76px;">0</div>
<div class="t" style="left:575.50px;top:617.26px;width:169.50px;height:23.76px;line-height:26.76px;">Зарлагын гүйлгээний</div>
<div class="t" style="left:749.50px;top:617.26px;width:90.50px;height:23.76px;line-height:26.76px;">Шимтгэл</div>
<div class="t" style="left:844.50px;top:617.26px;width:96.50px;height:23.76px;line-height:26.76px;">Хаан</div>
<div class="t r" style="left:941.00px;top:617.26px;width:109.50px;height:23.76px;line-height:26.76px;">300</div>
<div class="t r" style="left:1055.00px;top:617.26px;width:109.50px;height:23.76px;line-height:26.76px;">300</div>
<div class="t r" style="left:39.00px;top:641.02px;width:24.50px;height:23.76px;line-height:26.76px;">1</div>
<div class="t" style="left:72.50px;top:641.02px;width:124.50px;height:23.76px;line-height:26.76px;margin-left:-2px">Зардал</div>
<div class="t" style="left:201.50px;top:641.02px;width:134.50px;height:23.76px;line-height:26.76px;">Е ХХК</div>
<div class="t r" style="left:336.00px;top:641.02px;width:31.50px;height:23.76px;line-height:26.76px;">1</div>
<div class="t r" style="left:372.00px;top:641.02px;width:105.50px;height:23.76px;line-height:26.76px;">2019/01/25</div>
<div class="t r" style="left:482.00px;top:641.02px;width:84.50px;height:23.76px;line-height:26.76px;">0</div>
<div class="t" style="left:575.50px;top:641.02px;width:169.50px;height:23.76px;line-height:26.76px;">Ахмад настны хүлээн авалт</div>
<div class="t" style="left:749.50px;top:641.02px;width:90.50px;height:23.76px;line-height:26.76px;">ХАЗ</div>
<div class="t" style="left:844.50px;top:641.02px;width:96.50px;height:23.76px;line-height:26.76px;">касст</div>
<div class="t r" style="left:941.00px;top:641.02px;width:109.50px;height:23.76px;line-height:26.76px;">260,210</div>
<div class="t r" style="left:1055.00px;top:641.02px;width:109.50px;height:23.76px;line-height:26.76px;">260,210</div>
<div class="t r" style="left:39.00px;top:664.78px;width:24.50px;height:23.76px;line-height:26.76px;">1</div>
<div class="t" style="left:72.50px;top:664.78px;width:124.50px;height:23.76px;line-height:26.76px;margin-left:-2px">Зардал</div>
<div class="t r" style="left:336.00px;top:664.78px;width:31.50px;height:23.76px;line-height:26.76px;">1</div>
<div class="t r" style="left:372.00px;top:664.78px;width:105.50px;height:23.76px;line-height:26.76px;">2019/01/27</div>
<div class="t r" style="left:482.00px;top:664.78px;width:84.50px;height:23.76px;line-height:26.76px;">0</div>
<div class="t" style="left:575.50px;top:664.78px;width:169.50px;height:23.76px;line-height:26.76px;">Sariin huraamj baiguullaga</div>
<div class="t" style="left:749.50px;top:664.78px;width:90.50px;height:23.76px;line-height:26.76px;">Шимтгэл</div>
<div class="t" style="left:844.50px;top:664.78px;width:96.50px;height:23.76px;line-height:26.76px;">Хас</div>
<div class="t r" style="left:941.00px;top:664.78px;width:109.50px;height:23.76px;line-height:26.76px;">1,000</div>
<div class="t r" style="left:1055.00px;top:664.78px;width:109.50px;height:23.76px;line-height:26.76px;">1,000</div>
<div class="t r" style="left:39.00px;top:688.54px;width:24.50px;height:23.76px;line-height:26.76px;">1</div>
<div class="t" style="left:72.50px;top:688.54px;width:124.50px;height:23.76px;line-height:26.76px;margin-left:-2px">Зардал</div>
<div class="t r" style="left:336.00px;top:688.54px;width:31.50px;height:23.76px;line-height:26.76px;">1</div>
<div class="t r" style="left:372.00px;top:688.54px;width:105.50px;height:23.76px;line-height:26.76px;">2019/01/27</div>
<div class="t r" style="left:482.00px;top:688.54px;width:84.50px;height:23.76px;line-height:26.76px;">0</div>
<div class="t" style="left:575.50px;top:688.54px;width:169.50px;height:23.76px;line-height:26.76px;">Sariin huraamj baiguullaga</div>
<div class="t" style="left:749.50px;top:688.54px;width:90.50px;height:23.76px;line-height:26.76px;">Шимтгэл</div>
<div class="t" style="left:844.50px;top:688.54px;width:96.50px;height:23.76px;line-height:26.76px;">ХХБ</div>
<div class="t r" style="left:941.00px;top:688.54px;width:109.50px;height:23.76px;line-height:26.76px;">1,000</div>
<div class="t r" style="left:1055.00px;top:688.54px;width:109.50px;height:23.76px;line-height:26.76px;">1,000</div>
<div class="t r" style="left:39.00px;top:712.30px;width:24.50px;height:23.76px;line-height:26.76px;">1</div>
<div class="t" style="left:72.50px;top:712.30px;width:124.50px;height:23.76px;line-height:26.76px;margin-left:-2px">Зардал</div>
<div class="t r" style="left:336.00px;top:712.30px;width:31.50px;height:23.76px;line-height:26.76px;">1</div>
<div class="t r" style="left:372.00px;top:712.30px;width:105.50px;height:23.76px;line-height:26.76px;">2019/01/27</div>
<div class="t r" style="left:482.00px;top:712.30px;width:84.50px;height:23.76px;line-height:26.76px;">0</div>
<div class="t" style="left:575.50px;top:712.30px;width:169.50px;height:23.76px;line-height:26.76px;">Шатахууны үнэ</div>
<div class="t" style="left:749.50px;top:712.30px;width:90.50px;height:23.76px;line-height:26.76px;">ШЗ</div>
<div class="t" style="left:844.50px;top:712.30px;width:96.50px;height:23.76px;line-height:26.76px;">касст</div>
<div class="t r" style="left:941.00px;top:712.30px;width:109.50px;height:23.76px;line-height:26.76px;">20,000</div>
<div class="t r" style="left:1055.00px;top:712.30px;width:109.50px;height:23.76px;line-height:26.76px;">20,000</div>
<div class="t r" style="left:39.00px;top:736.06px;width:24.50px;height:23.76px;line-height:26.76px;">1</div>
<div class="t" style="left:72.50px;top:736.06px;width:124.50px;height:23.76px;line-height:26.76px;margin-left:-2px">Зардал</div>
<div class="t r" style="left:336.00px;top:736.06px;width:31.50px;height:23.76px;line-height:26.76px;">1</div>
<div class="t r" style="left:372.00px;top:736.06px;width:105.50px;height:23.76px;line-height:26.76px;">2019/01/28</div>
<div class="t r" style="left:482.00px;top:736.06px;width:84.50px;height:23.76px;line-height:26.76px;">0</div>
<div class="t" style="left:575.50px;top:736.06px;width:169.50px;height:23.76px;line-height:26.76px;">Зарлагын гүйлгээний</div>
<div class="t" style="left:749.50px;top:736.06px;width:90.50px;height:23.76px;line-height:26.76px;">Шимтгэл</div>
<div class="t" style="left:844.50px;top:736.06px;width:96.50px;height:23.76px;line-height:26.76px;">Хаан</div>
<div class="t r" style="left:941.00px;top:736.06px;width:109.50px;height:23.76px;line-height:26.76px;">300</div>
<div class="t r" style="left:1055.00px;top:736.06px;width:109.50px;height:23.76px;line-height:26.76px;">300</div>
<div class="t r" style="left:39.00px;top:759.82px;width:24.50px;height:23.76px;line-height:26.76px;">1</div>
<div class="t" style="left:72.50px;top:759.82px;width:124.50px;height:23.76px;line-height:26.76px;margin-left:-2px">Зардал</div>
<div class="t" style="left:201.50px;top:759.82px;width:134.50px;height:23.76px;line-height:26.76px;">Д ХХК</div>
<div class="t r" style="left:336.00px;top:759.82px;width:31.50px;height:23.76px;line-height:26.76px;">1</div>
<div class="t r" style="left:372.00px;top:759.82px;width:105.50px;height:23.76px;line-height:26.76px;">2019/01/28</div>
<div class="t r" style="left:482.00px;top:759.82px;width:84.50px;height:23.76px;line-height:26.76px;">0</div>
<div class="t" style="left:575.50px;top:759.82px;width:169.50px;height:23.76px;line-height:26.76px;">Савтай ус</div>
<div class="t" style="left:749.50px;top:759.82px;width:90.50px;height:23.76px;line-height:26.76px;">ҮЗ</div>
<div class="t" style="left:844.50px;top:759.82px;width:96.50px;height:23.76px;line-height:26.76px;">касст</div>
<div class="t r" style="left:941.00px;top:759.82px;width:109.50px;height:23.76px;line-height:26.76px;">10,500</div>
<div class="t r" style="left:1055.00px;top:759.82px;width:109.50px;height:23.76px;line-height:26.76px;">10,500</div>
<div class="t r" style="left:39.00px;top:783.58px;width:24.50px;height:23.76px;line-height:26.76px;">1</div>
<div class="t" style="left:72.50px;top:783.58px;width:124.50px;height:23.76px;line-height:26.76px;margin-left:-2px">Зардал</div>
<div class="t r" style="left:336.00px;top:783.58px;width:31.50px;height:23.76px;line-height:26.76px;">1</div>
<div class="t r" style="left:372.00px;top:783.58px;width:105.50px;height:23.76px;line-height:26.76px;">2019/01/31</div>
<div class="t r" style="left:482.00px;top:783.58px;width:84.50px;height:23.76px;line-height:26.76px;">0</div>
<div class="t" style="left:575.50px;top:783.58px;width:169.50px;height:23.76px;line-height:26.76px;">Данс хөтөлсөний хураамж</div>
<div class="t" style="left:749.50px;top:783.58px;width:90.50px;height:23.76px;line-height:26.76px;">Шимтгэл</div>
<div class="t" style="left:844.50px;top:783.58px;width:96.50px;height:23.76px;line-height:26.76px;">Хаан</div>
<div class="t r" style="left:941.00px;top:783.58px;width:109.50px;height:23.76px;line-height:26.76px;">2,000</div>
<div class="t r" style="left:1055.00px;top:783.58px;width:109.50px;height:23.76px;line-height:26.76px;">2,000</div>
<div class="t r" style="left:39.00px;top:807.34px;width:24.50px;height:23.76px;line-height:26.76px;">1</div>
<div class="t" style="left:72.50px;top:807.34px;width:124.50px;height:23.76px;line-height:26.76px;margin-left:-2px">Зардал</div>
<div class="t" style="left:201.50px;top:807.34px;width:134.50px;height:23.76px;line-height:26.76px;">Д ХХК</div>
<div class="t r" style="left:336.00px;top:807.34px;width:31.50px;height:23.76px;line-height:26.76px;">2</div>
<div class="t r" style="left:372.00px;top:807.34px;width:105.50px;height:23.76px;line-height:26.76px;">2019/02/01</div>
<div class="t r" style="left:482.00px;top:807.34px;width:84.50px;height:23.76px;line-height:26.76px;">0</div>
<div class="t" style="left:575.50px;top:807.34px;width:169.50px;height:23.76px;line-height:26.76px;">Аудитын төлбөр төлсөн</div>
<div class="t" style="left:749.50px;top:807.34px;width:90.50px;height:23.76px;line-height:26.76px;">ҮЗ</div>
<div class="t" style="left:844.50px;top:807.34px;width:96.50px;height:23.76px;line-height:26.76px;">касст</div>
<div class="t r" style="left:941.00px;top:807.34px;width:109.50px;height:23.76px;line-height:26.76px;">200,000</div>
<div class="t r" style="left:1055.00px;top:807.34px;width:109.50px;height:23.76px;line-height:26.76px;">200,000</div>
<div class="t r" style="left:39.00px;top:831.10px;width:24.50px;height:23.76px;line-height:26.76px;">1</div>
<div class="t" style="left:72.50px;top:831.10px;width:124.50px;height:23.76px;line-height:26.76px;margin-left:-2px">Зардал</div>
<div class="t r" style="left:336.00px;top:831.10px;width:31.50px;height:23.76px;line-height:26.76px;">2</div>
<div class="t r" style="left:372.00px;top:831.10px;width:105.50px;height:23.76px;line-height:26.76px;">2019/02/10</div>
<div class="t r" style="left:482.00px;top:831.10px;width:84.50px;height:23.76px;line-height:26.76px;">0</div>
<div class="t" style="left:575.50px;top:831.10px;width:169.50px;height:23.76px;line-height:26.76px;">Шатахууны үнэ</div>
<div class="t" style="left:749.50px;top:831.10px;width:90.50px;height:23.76px;line-height:26.76px;">ШЗ</div>
<div class="t" style="left:844.50px;top:831.10px;width:96.50px;height:23.76px;line-height:26.76px;">касст</div>
<div class="t r" style="left:941.00px;top:831.10px;width:109.50px;height:23.76px;line-height:26.76px;">20,000</div>
<div class="t r" style="left:1055.00px;top:831.10px;width:109.50px;height:23.76px;line-height:26.76px;">20,000</div>
<div class="t r" style="left:39.00px;top:854.86px;width:24.50px;height:23.76px;line-height:26.76px;">1</div>
<div class="t" style="left:72.50px;top:854.86px;width:124.50px;height:23.76px;line-height:26.76px;margin-left:-2px">Зардал</div>
<div class="t" style="left:201.50px;top:854.86px;width:134.50px;height:23.76px;line-height:26.76px;">Д ХХК</div>
<div class="t r" style="left:336.00px;top:854.86px;width:31.50px;height:23.76px;line-height:26.76px;">2</div>
<div class="t r" style="left:372.00px;top:854.86px;width:105.50px;height:23.76px;line-height:26.76px;">2019/02/11</div>
<div class="t r" style="left:482.00px;top:854.86px;width:84.50px;height:23.76px;line-height:26.76px;">0</div>
<div class="t" style="left:575.50px;top:854.86px;width:169.50px;height:23.76px;line-height:26.76px;">Савтай ус</div>
<div class="t" style="left:749.50px;top:854.86px;width:90.50px;height:23.76px;line-height:26.76px;">ҮЗ</div>
<div class="t" style="left:844.50px;top:854.86px;width:96.50px;height:23.76px;line-height:26.76px;">касст</div>
<div class="t r" style="left:941.00px;top:854.86px;width:109.50px;height:23.76px;line-height:26.76px;">14,000</div>
<div class="t r" style="left:1055.00px;top:854.86px;width:109.50px;height:23.76px;line-height:26.76px;">14,000</div>
<div class="t r" style="left:39.00px;top:878.62px;width:24.50px;height:23.76px;line-height:26.76px;">1</div>
<div class="t" style="left:72.50px;top:878.62px;width:124.50px;height:23.76px;line-height:26.76px;margin-left:-2px">Зардал</div>
<div class="t r" style="left:336.00px;top:878.62px;width:31.50px;height:23.76px;line-height:26.76px;">2</div>
<div class="t r" style="left:372.00px;top:878.62px;width:105.50px;height:23.76px;line-height:26.76px;">2019/02/14</div>
<div class="t r" style="left:482.00px;top:878.62px;width:84.50px;height:23.76px;line-height:26.76px;">0</div>
<div class="t" style="left:575.50px;top:878.62px;width:169.50px;height:23.76px;line-height:26.76px;">Шатахууны үнэ</div>
<div class="t" style="left:749.50px;top:878.62px;width:90.50px;height:23.76px;line-height:26.76px;">ШЗ</div>
<div class="t" style="left:844.50px;top:878.62px;width:96.50px;height:23.76px;line-height:26.76px;">касст</div>
<div class="t r" style="left:941.00px;top:878.62px;width:109.50px;height:23.76px;line-height:26.76px;">50,000</div>
<div class="t r" style="left:1055.00px;top:878.62px;width:109.50px;height:23.76px;line-height:26.76px;">50,000</div>
<div class="t r" style="left:39.00px;top:902.38px;width:24.50px;height:23.76px;line-height:26.76px;">1</div>
<div class="t" style="left:72.50px;top:902.38px;width:124.50px;height:23.76px;line-height:26.76px;margin-left:-2px">Зардал</div>
<div class="t r" style="left:336.00px;top:902.38px;width:31.50px;height:23.76px;line-height:26.76px;">2</div>
<div class="t r" style="left:372.00px;top:902.38px;width:105.50px;height:23.76px;line-height:26.76px;">2019/02/15</div>
<div class="t r" style="left:482.00px;top:902.38px;width:84.50px;height:23.76px;line-height:26.76px;">0</div>
<div class="t" style="left:575.50px;top:902.38px;width:169.50px;height:23.76px;line-height:26.76px;">Зарлагын гүйлгээний</div>
<div class="t" style="left:749.50px;top:902.38px;width:90.50px;height:23.76px;line-height:26.76px;">Шимтгэл</div>
<div class="t" style="left:844.50px;top:902.38px;width:96.50px;height:23.76px;line-height:26.76px;">Хаан</div>
<div class="t r" style="left:941.00px;top:902.38px;width:109.50px;height:23.76px;line-height:26.76px;">300</div>
<div class="t r" style="left:1055.00px;top:902.38px;width:109.50px;height:23.76px;line-height:26.76px;">300</div>
<div class="t r" style="left:39.00px;top:926.14px;width:24.50px;height:23.76px;line-height:26.76px;">1</div>
<div class="t" style="left:72.50px;top:926.14px;width:124.50px;height:23.76px;line-height:26.76px;margin-left:-2px">Зардал</div>
<div class="t" style="left:201.50px;top:926.14px;width:134.50px;height:23.76px;line-height:26.76px;">В ХХК</div>
<div class="t r" style="left:336.00px;top:926.14px;width:31.50px;height:23.76px;line-height:26.76px;">2</div>
<div class="t r" style="left:372.00px;top:926.14px;width:105.50px;height:23.76px;line-height:26.76px;">2019/02/15</div>
<div class="t r" style="left:482.00px;top:926.14px;width:84.50px;height:23.76px;line-height:26.76px;">0</div>
<div class="t" style="left:575.50px;top:926.14px;width:169.50px;height:23.76px;line-height:26.76px;">Тогны мөнгө /4191540/</div>
<div class="t" style="left:749.50px;top:926.14px;width:90.50px;height:23.76px;line-height:26.76px;">АЗ</div>
<div class="t" style="left:844.50px;top:926.14px;width:96.50px;height:23.76px;line-height:26.76px;">касст</div>
<div class="t r" style="left:941.00px;top:926.14px;width:109.50px;height:23.76px;line-height:26.76px;">303,694</div>
<div class="t r" style="left:1055.00px;top:926.14px;width:109.50px;height:23.76px;line-height:26.76px;">303,694</div>
<div class="t r" style="left:39.00px;top:949.90px;width:24.50px;height:23.76px;line-height:26.76px;">1</div>
<div class="t" style="left:72.50px;top:949.90px;width:124.50px;height:23.76px;line-height:26.76px;margin-left:-2px">Зардал</div>
<div class="t r" style="left:336.00px;top:949.90px;width:31.50px;height:23.76px;line-height:26.76px;">2</div>
<div class="t r" style="left:372.00px;top:949.90px;width:105.50px;height:23.76px;line-height:26.76px;">2019/02/16</div>
<div class="t r" style="left:482.00px;top:949.90px;width:84.50px;height:23.76px;line-height:26.76px;">0</div>
<div class="t" style="left:575.50px;top:949.90px;width:169.50px;height:23.76px;line-height:26.76px;">Шатахууны үнэ</div>
<div class="t" style="left:749.50px;top:949.90px;width:90.50px;height:23.76px;line-height:26.76px;">ШЗ</div>
<div class="t" style="left:844.50px;top:949.90px;width:96.50px;height:23.76px;line-height:26.76px;">касст</div>
<div class="t r" style="left:941.00px;top:949.90px;width:109.50px;height:23.76px;line-height:26.76px;">20,000</div>
<div class="t r" style="left:1055.00px;top:949.90px;width:109.50px;height:23.76px;line-height:26.76px;">20,000</div>
<div class="t r" style="left:39.00px;top:973.66px;width:24.50px;height:23.76px;line-height:26.76px;">1</div>
<div class="t" style="left:72.50px;top:973.66px;width:124.50px;height:23.76px;line-height:26.76px;margin-left:-2px">Зардал</div>
<div class="t" style="left:201.50px;top:973.66px;width:134.50px;height:23.76px;line-height:26.76px;">В ХХК</div>
<div class="t r" style="left:336.00px;top:973.66px;width:31.50px;height:23.76px;line-height:26.76px;">2</div>
<div class="t r" style="left:372.00px;top:973.66px;width:105.50px;height:23.76px;line-height:26.76px;">2019/02/18</div>
<div class="t r" style="left:482.00px;top:973.66px;width:84.50px;height:23.76px;line-height:26.76px;">0</div>
<div class="t" style="left:575.50px;top:973.66px;width:169.50px;height:23.76px;line-height:26.76px;">Ус дулааны төлбөр</div>
<div class="t" style="left:749.50px;top:973.66px;width:90.50px;height:23.76px;line-height:26.76px;">АЗД</div>
<div class="t" style="left:844.50px;top:973.66px;width:96.50px;height:23.76px;line-height:26.76px;">касст</div>
<div class="t r" style="left:941.00px;top:973.66px;width:109.50px;height:23.76px;line-height:26.76px;">581,514</div>
<div class="t r" style="left:1055.00px;top:973.66px;width:109.50px;height:23.76px;line-height:26.76px;">581,514</div>
<div class="t r" style="left:39.00px;top:997.42px;width:24.50px;height:23.76px;line-height:26.76px;">1</div>
<div class="t" style="left:72.50px;top:997.42px;width:124.50px;height:23.76px;line-height:26.76px;margin-left:-2px">Зардал</div>
<div class="t" style="left:201.50px;top:997.42px;width:134.50px;height:23.76px;line-height:26.76px;">Д ХХК</div>
<div class="t r" style="left:336.00px;top:997.42px;width:31.50px;height:23.76px;line-height:26.76px;">2</div>
<div class="t r" style="left:372.00px;top:997.42px;width:105.50px;height:23.76px;line-height:26.76px;">2019/02/18</div>
<div class="t r" style="left:482.00px;top:997.42px;width:84.50px;height:23.76px;line-height:26.76px;">0</div>
<div class="t" style="left:575.50px;top:997.42px;width:169.50px;height:23.76px;line-height:26.76px;">Ариутгалын бодис</div>
<div class="t" style="left:749.50px;top:997.42px;width:90.50px;height:23.76px;line-height:26.76px;">ҮЗ</div>
<div class="t" style="left:844.50px;top:997.42px;width:96.50px;height:23.76px;line-height:26.76px;">касст</div>
<div class="t r" style="left:941.00px;top:997.42px;width:109.50px;height:23.76px;line-height:26.76px;">53,000</div>
<div class="t r" style="left:1055.00px;top:997.42px;width:109.50px;height:23.76px;line-height:26.76px;">53,000</div>
<div class="t" style="left:1360px;top:195px;font-size:13px;line-height:14px;color:#d23a2a;font-style:italic;font-weight:bold">7</div>
<div class="t" style="left:1360px;top:409px;font-size:13px;line-height:14px;color:#d23a2a;font-style:italic;font-weight:bold">7</div>
<div class="a" style="left:1368px;top:491px;width:2px;height:2px;background:#e04030"></div>
<div class="a" style="left:1368px;top:586px;width:2px;height:2px;background:#e04030"></div>
<div class="a" style="left:1168px;top:568.74px;width:109px;height:25.76px;border:2px solid #217346"></div>
<div class="a" style="left:1273px;top:590.50px;width:6px;height:6px;background:#217346;border:1px solid #fff"></div>
<svg class="a" style="left:1190px;top:504px" width="110" height="110"><circle cx="54" cy="54" r="45" fill="none" stroke="rgba(240,120,120,0.4)" stroke-width="6"/></svg>
<svg class="a" style="left:650px;top:52px" width="130" height="130"><circle cx="63" cy="63" r="56" fill="rgba(250,250,0,0.78)" stroke="rgba(230,230,150,0.5)" stroke-width="2"/></svg>
<svg class="a" style="left:703px;top:105px" width="20" height="20"><path d="M6 1 H14 V6 H19 V14 H14 V19 H6 V14 H1 V6 H6 Z" fill="#000"/><path d="M7.3 2.2 H12.7 V7.2 H17.4 V11.8 H12.7 V16.8 H7.3 V11.8 H2.3 V7.2 H7.3 Z" fill="#fff"/></svg>
<div class="a" style="left:0;top:1025.5px;width:1920px;height:34.5px;background:#ebebeb"></div>
<div class="a" style="left:0;top:1025px;width:1920px;height:1px;background:#b4b4b4"></div>
<div class="a" style="left:0;top:1059px;width:1920px;height:1px;background:#d0d0d0"></div>
<svg class="a" style="left:30px;top:1035px" width="50" height="16"><path d="M10 2 L3 8 L10 14 Z" fill="#c4c4c4"/><path d="M37.5 2 L43.5 8 L37.5 14 Z" fill="#c4c4c4"/></svg>
<div class="sep" style="left:122px"></div>
<div class="a" style="left:126px;top:1029px;width:70px;height:27px;background:#0000fe"></div>
<div class="tab" style="left:126px;width:70px;color:#fff;text-indent:-2px">Main</div>
<div class="sep" style="left:198px"></div>
<div class="tab" style="left:200px;width:106px;letter-spacing:0.83px;text-indent:0.8px">togtmol</div>
<div class="sep" style="left:305px"></div>
<div class="tab" style="left:307px;width:82px;letter-spacing:0.72px;text-indent:-3px">jurnal</div>
<div class="sep" style="left:388px"></div>
<div class="a" style="left:391px;top:1029px;width:140px;height:27px;background:#ffff00"></div>
<div class="tab" style="left:391px;width:140px;color:#111">tootsoonegt</div>
<div class="sep" style="left:533px"></div>
<div class="a" style="left:537px;top:1029px;width:123px;height:27px;background:#ffff00"></div>
<div class="tab" style="left:537px;width:123px;color:#111;letter-spacing:-0.58px">aj_husnegt</div>
<div class="sep" style="left:663px"></div>
<div class="tab" style="left:665px;width:78px">tsalin</div>
<div class="a" style="left:743px;top:1025px;width:95px;height:31px;background:#fff;border-left:1px solid #c6c6c6;border-right:1px solid #c6c6c6"></div>
<div class="a" style="left:743px;top:1054px;width:95px;height:3px;background:#217346"></div>
<div class="tab" style="left:743px;width:95px;color:#217346;font-weight:bold;letter-spacing:-0.4px">jurnal1</div>
<div class="tab" style="left:838px;width:76px">Pivot</div>
<div class="sep" style="left:913px"></div>
<svg class="a" style="left:952px;top:1030px" width="26" height="26"><circle cx="13" cy="13" r="11" fill="none" stroke="#c8c8c8" stroke-width="1.5"/><path d="M13 7 V19 M7 13 H19" stroke="#c0c0c0" stroke-width="1.5"/></svg>
<svg class="a" style="left:1633px;top:1034px" width="8" height="18"><rect x="2" y="1" width="3" height="3" fill="#a0a0a0"/><rect x="2" y="7" width="3" height="3" fill="#a0a0a0"/><rect x="2" y="13" width="3" height="3" fill="#a0a0a0"/></svg>
<div class="a" style="left:1657px;top:1031px;width:263px;height:23px;background:#dadada"></div>
<div class="a" style="left:1657px;top:1031px;width:23px;height:23px;background:#fff;border:1px solid #c4c4c4"></div>
<svg class="a" style="left:1663px;top:1036px" width="10" height="14"><path d="M8 1 L2 7 L8 13 Z" fill="#606060"/></svg>
<div class="a" style="left:1680px;top:1031px;width:24px;height:23px;background:#fff;border:1px solid #c4c4c4"></div>
<div class="a" style="left:0;top:1060px;width:1920px;height:20px;background:#f3f3f3"></div>
<div class="t" style="left:9px;top:1066.5px;font-size:15.5px;line-height:22px;color:#444">Ready</div>
<div class="a" style="left:1722px;top:1066px;width:23px;height:20px;background:#464646;border-radius:2px"></div>
<svg class="a" style="left:1730px;top:1072px" width="16" height="10"><path d="M2 10 C2 4 4 2 6 3 L8 1 L10 3 C12 2 14 4 14 10" fill="#555" stroke="#d0d0d0" stroke-width="1.5"/></svg>
<div class="t" style="left:1747px;top:1066px;font-size:15.5px;line-height:22px;color:#333">Display Settings</div>
<div class="a" style="left:1882px;top:1060px;width:38px;height:20px;background:#c6c6c6"></div>
<svg class="a" style="left:1896px;top:1066px" width="22" height="14"><path d="M1.5 1.5 H20 M1.5 7.5 H20 M1.5 13.5 H20 M1.5 1 V14 M8 1 V14 M14 1 V14 M20 1 V14" stroke="#666" stroke-width="1" fill="none"/></svg>
</body></html>
